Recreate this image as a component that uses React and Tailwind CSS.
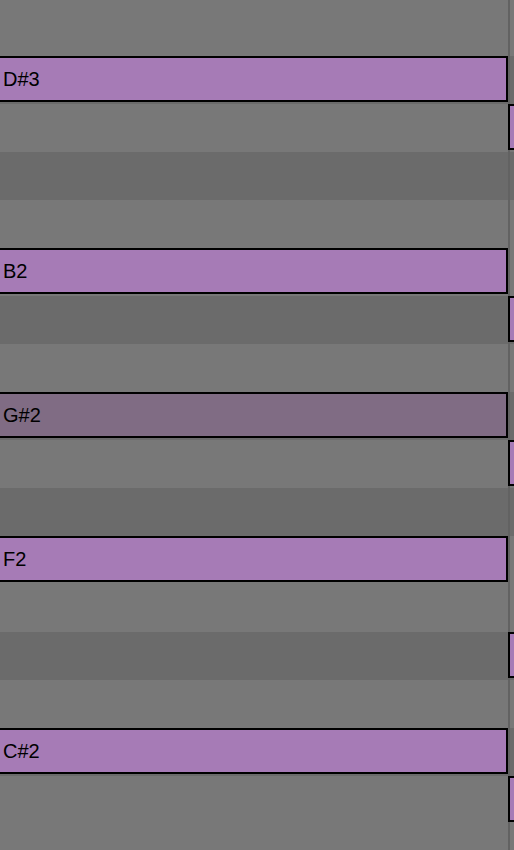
const ROWS = [
  { key: 'F3', black: false },
  { key: 'E3', black: false },
  { key: 'D#3', black: true, left: 'D#3' },
  { key: 'D3', black: false, right: true },
  { key: 'C#3', black: true },
  { key: 'C3', black: false },
  { key: 'B2', black: false, left: 'B2' },
  { key: 'A#2', black: true, right: true },
  { key: 'A2', black: false },
  { key: 'G#2', black: true, left: 'G#2', muted: true },
  { key: 'G2', black: false, right: true },
  { key: 'F#2', black: true },
  { key: 'F2', black: false, left: 'F2' },
  { key: 'E2', black: false },
  { key: 'D#2', black: true, right: true },
  { key: 'D2', black: false },
  { key: 'C#2', black: true, left: 'C#2' },
  { key: 'C2', black: false, right: true },
  { key: 'B1', black: false },
  { key: 'A#1', black: true },
]

export default function App() {
  return (
    <div
      className="w-[514px] h-[850px] overflow-hidden bg-[#787878]"
      style={{ fontFamily: '"Liberation Sans", Arial, sans-serif' }}
    >
      <div className="-mt-[40px] flex flex-col">
        {ROWS.map(r => (
          <div key={r.key} className={`relative flex h-[48px] ${r.black ? 'bg-[#6b6b6b]' : 'bg-[#787878]'}`}>
            {/* 왼쪽 마디 */}
            <div className="relative w-[508px] shrink-0">
              {r.left && (
                <div
                  className={`absolute top-0 -left-[2px] right-0 h-[46px] border-2 border-black flex items-center pl-[3px] text-[20px] leading-none text-black ${
                    r.muted ? 'bg-[#806c84]' : 'bg-[#a67bb6]'
                  }`}
                >
                  {r.left}
                </div>
              )}
            </div>
            {/* 마디선 */}
            <div className="w-[2px] shrink-0 bg-[#626262]" />
            <div className="flex-1" />
            {r.right && (
              <div className="absolute top-0 left-[508px] w-[20px] h-[46px] border-2 border-black bg-[#a67bb6]" />
            )}
          </div>
        ))}
      </div>
    </div>
  )
}
